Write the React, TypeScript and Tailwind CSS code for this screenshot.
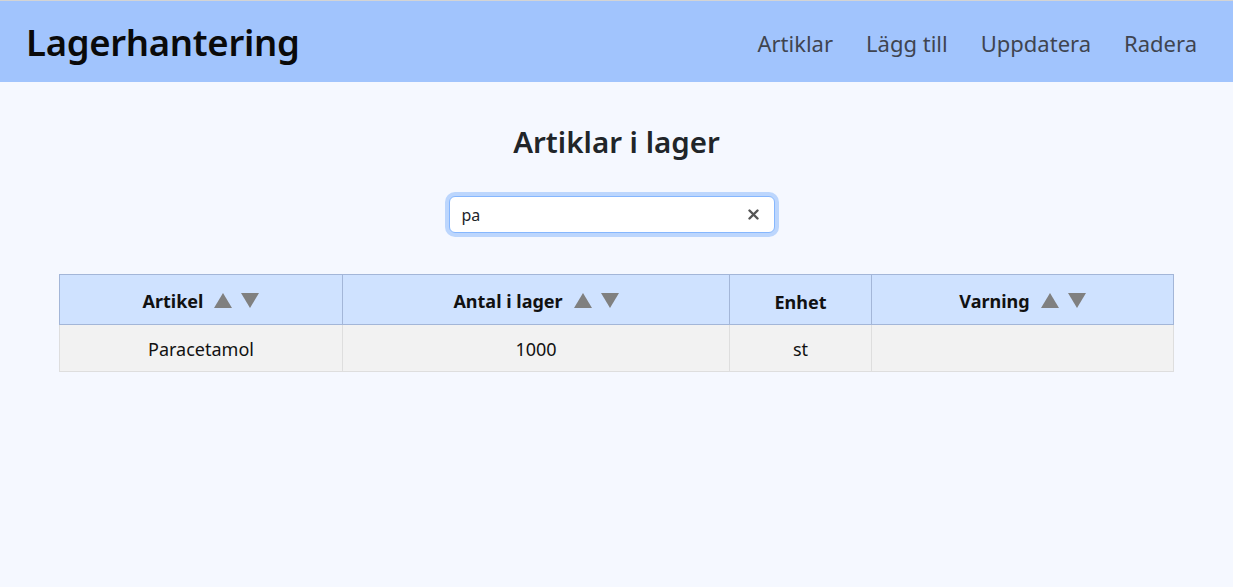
import React from "react";

const Tri = ({ down }: { down?: boolean }) => (
  <svg width="18" height="15" viewBox="0 0 18 15" className="inline-block">
    {down ? <polygon points="0,0 18,0 9,15" fill="#808080" /> : <polygon points="9,0 18,15 0,15" fill="#808080" />}
  </svg>
);

export default function App() {
  const font = { fontFamily: '"Noto Sans", "Open Sans", sans-serif' };
  return (
    <div className="min-h-[587px] w-full bg-[#f5f8ff] border-t border-[#d4d4d4]" style={font}>
      <header className="h-[81px] bg-[#a1c4fd] flex items-center justify-between pl-[26px] pr-[36px]">
        <h1 className="text-[36.5px] font-semibold text-[#0a0a0a] leading-none tracking-[-0.3px] pt-[2px]">Lagerhantering</h1>
        <nav className="flex gap-[33px] text-[22px] text-[#3f4450] pt-[4px]">
          <a>Artiklar</a>
          <a>Lägg till</a>
          <a>Uppdatera</a>
          <a>Radera</a>
        </nav>
      </header>
      <main className="flex flex-col items-center">
        <h2 className="mt-[40px] text-[29.5px] font-semibold text-[#212529] leading-[40px]">Artiklar i lager</h2>
        <div className="mt-[34px] relative w-[326px] -translate-x-[5px]">
          <div className="h-[37px] bg-white border border-[#86b7fe] rounded-[6px] shadow-[0_0_0_4px_#bcd6fd] flex items-center pl-[12px] pr-[12px] text-[16px] text-[#212529]">
            pa
          </div>
          <svg width="11" height="11" viewBox="0 0 11 11" className="absolute right-[16px] top-[13px]">
            <path d="M1.5 1.5 L9.5 9.5 M9.5 1.5 L1.5 9.5" stroke="#555" strokeWidth="2.4" strokeLinecap="round" />
          </svg>
        </div>
        <table className="mt-[41px] w-[1115px] border-collapse text-[18px] text-[#111]">
          <thead>
            <tr className="bg-[#cfe2ff] h-[50px]">
              <th className="w-[283px] border border-[#a3b6d8] font-bold pt-[3px]">
                <span className="inline-flex items-center gap-[9px]">Artikel <span className="ml-[2px] inline-flex gap-[9px] -mt-[2px]"><Tri /><Tri down /></span></span>
              </th>
              <th className="w-[387px] border border-[#a3b6d8] font-bold pt-[3px]">
                <span className="inline-flex items-center gap-[9px]">Antal i lager <span className="ml-[2px] inline-flex gap-[9px] -mt-[2px]"><Tri /><Tri down /></span></span>
              </th>
              <th className="w-[142px] border border-[#a3b6d8] font-bold pt-[5px]">Enhet</th>
              <th className="border border-[#a3b6d8] font-bold pt-[3px]">
                <span className="inline-flex items-center gap-[9px]">Varning <span className="ml-[2px] inline-flex gap-[9px] -mt-[2px]"><Tri /><Tri down /></span></span>
              </th>
            </tr>
          </thead>
          <tbody>
            <tr className="bg-[#f2f2f2] h-[47px] text-center">
              <td className="border border-[#dedede] pt-[2px]">Paracetamol</td>
              <td className="border border-[#dedede] pt-[2px]">1000</td>
              <td className="border border-[#dedede] pt-[2px]">st</td>
              <td className="border border-[#dedede]"></td>
            </tr>
          </tbody>
        </table>
      </main>
    </div>
  );
}
